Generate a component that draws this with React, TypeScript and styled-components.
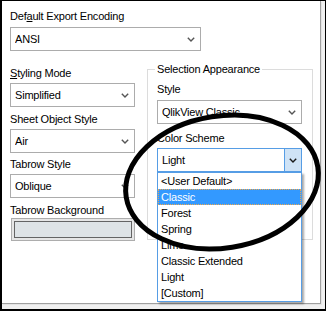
import React from 'react';
import styled, { createGlobalStyle } from 'styled-components';

const Global = createGlobalStyle`
  html, body { margin: 0; padding: 0; background: #fff; }
  body {
    font-family: "Liberation Sans", Arial, sans-serif;
    font-size: 11px;
    letter-spacing: -0.2px;
    color: #000;
  }
  * { box-sizing: border-box; }
`;

const Frame = styled.div`
  position: relative;
  width: 326px;
  height: 311px;
  border-style: solid;
  border-color: #000;
  border-width: 1px 1px 2px 2px;
  background: #f0f0f0;
  overflow: hidden;
`;

const Page = styled.div`
  width: 319px;
  height: 303px;
  background: #fff;
  border-right: 1px solid #a0a0a0;
  border-bottom: 1px solid #a0a0a0;
  box-shadow: 1px 1px 0 #e3e3e3;
  padding: 9px 0 0 8px;
  display: flex;
  flex-direction: column;
`;

const Field = styled.div<{ $top?: number; $gap?: number }>`
  display: flex;
  flex-direction: column;
  gap: ${(p) => p.$gap ?? 3}px;
  margin-top: ${(p) => p.$top ?? 0}px;
`;

const Label = styled.div`
  line-height: 13px;
  white-space: nowrap;
`;

const Key = styled.span`
  text-decoration: underline;
  text-underline-offset: 1px;
`;

const Select = styled.div<{ $w: number; $focus?: boolean }>`
  position: relative;
  width: ${(p) => p.$w}px;
  height: 24px;
  border: 1px solid ${(p) => (p.$focus ? '#569de5' : '#acacac')};
  background: #fff;
  display: flex;
  align-items: center;
  padding-left: 4px;
`;

const Value = styled.span`
  flex: 1;
  line-height: 14px;
  white-space: nowrap;
  overflow: hidden;
`;

const Arrow = styled.span`
  width: 16px;
  height: 100%;
  display: flex;
  align-items: center;
  justify-content: center;
  margin-right: 1px;
`;

const DropButton = styled.span`
  width: 17px;
  height: 100%;
  display: flex;
  align-items: center;
  justify-content: center;
  border-left: 1px solid #569de5;
  background: #cfe3f6;
`;

const Row = styled.div`
  display: flex;
  align-items: flex-start;
  margin-top: 12px;
`;

const Column = styled.div<{ $w: number; $top?: number }>`
  width: ${(p) => p.$w}px;
  margin-top: ${(p) => p.$top ?? 0}px;
  display: flex;
  flex-direction: column;
`;

const Group = styled.fieldset`
  margin: 0 0 0 12px;
  padding: 0;
  min-width: 0;
  width: 166px;
  border: 1px solid #dcdcdc;
`;

const Legend = styled.legend`
  margin-left: 7px;
  padding: 0 2px;
  line-height: 13px;
`;

const GroupBody = styled.div`
  padding: 7px 10px 67px 9px;
  display: flex;
  flex-direction: column;
`;

const Swatch = styled.div`
  margin-left: 1px;
  width: 124px;
  height: 23px;
  border: 1px solid #adadad;
  background: #e6e6e6;
  padding: 2px;
`;

const SwatchFill = styled.div<{ $color: string }>`
  width: 100%;
  height: 100%;
  border: 1px solid #646464;
  background: ${(p) => p.$color};
`;

const List = styled.ul`
  position: absolute;
  left: -1px;
  top: calc(100% + 1px);
  width: 145px;
  margin: 0;
  padding: 0;
  list-style: none;
  background: #fff;
  border: 1px solid #569de5;
  box-shadow: 2px 2px 2px rgba(0, 0, 0, 0.35);
  z-index: 2;
`;

const Item = styled.li<{ $active?: boolean }>`
  height: 16px;
  line-height: 14px;
  padding-left: 2px;
  border: 1px ${(p) => (p.$active ? 'dotted #f0a84a' : 'solid transparent')};
  background: ${(p) => (p.$active ? '#3399ff' : 'transparent')};
  color: ${(p) => (p.$active ? '#fff' : '#000')};
  white-space: nowrap;
`;

const Circle = styled.svg`
  position: absolute;
  left: -2px;
  top: -1px;
  width: 326px;
  height: 311px;
  pointer-events: none;
  z-index: 3;
`;

const Chevron = ({ color = '#555' }: { color?: string }) => (
  <svg width="8" height="5" viewBox="0 0 8 5">
    <polyline points="0.8,0.8 4,4 7.2,0.8" fill="none" stroke={color} strokeWidth="1.4" />
  </svg>
);

const Combo = ({ w, value }: { w: number; value: string }) => (
  <Select $w={w}>
    <Value>{value}</Value>
    <Arrow>
      <Chevron />
    </Arrow>
  </Select>
);

const schemes = ['<User Default>', 'Classic', 'Forest', 'Spring', 'Lime', 'Classic Extended', 'Light', '[Custom]'];

export default function App() {
  return (
    <>
      <Global />
      <Frame>
        <Page>
          <Field $gap={4}>
            <Label>
              Def<Key>a</Key>ult Export Encoding
            </Label>
            <Combo w={191} value="ANSI" />
          </Field>
          <Row>
            <Column $w={125} $top={4}>
              <Field>
                <Label>
                  <Key>S</Key>tyling Mode
                </Label>
                <Combo w={125} value="Simplified" />
              </Field>
              <Field $top={6}>
                <Label>Sheet Object Style</Label>
                <Combo w={125} value="Air" />
              </Field>
              <Field $top={5}>
                <Label>Tabrow Style</Label>
                <Combo w={125} value="Oblique" />
              </Field>
              <Field $top={6} $gap={1}>
                <Label>Tabrow Background</Label>
                <Swatch>
                  <SwatchFill $color="#dee3e6" />
                </Swatch>
              </Field>
            </Column>
            <Group>
              <Legend>Selection Appearance</Legend>
              <GroupBody>
                <Field $gap={4}>
                  <Label>Style</Label>
                  <Combo w={145} value="QlikView Classic" />
                </Field>
                <Field $top={8}>
                  <Label>Color Scheme</Label>
                  <Select $w={145} $focus>
                    <Value>Light</Value>
                    <DropButton>
                      <Chevron color="#1a1a1a" />
                    </DropButton>
                    <List>
                      {schemes.map((s) => (
                        <Item key={s} $active={s === 'Classic'}>
                          {s}
                        </Item>
                      ))}
                    </List>
                  </Select>
                </Field>
              </GroupBody>
            </Group>
          </Row>
        </Page>
        <Circle viewBox="0 0 326 311">
          <ellipse
            cx="222"
            cy="182"
            rx="97"
            ry="66"
            transform="rotate(-9 222 182)"
            fill="none"
            stroke="#000"
            strokeWidth="5"
          />
        </Circle>
      </Frame>
    </>
  );
}
